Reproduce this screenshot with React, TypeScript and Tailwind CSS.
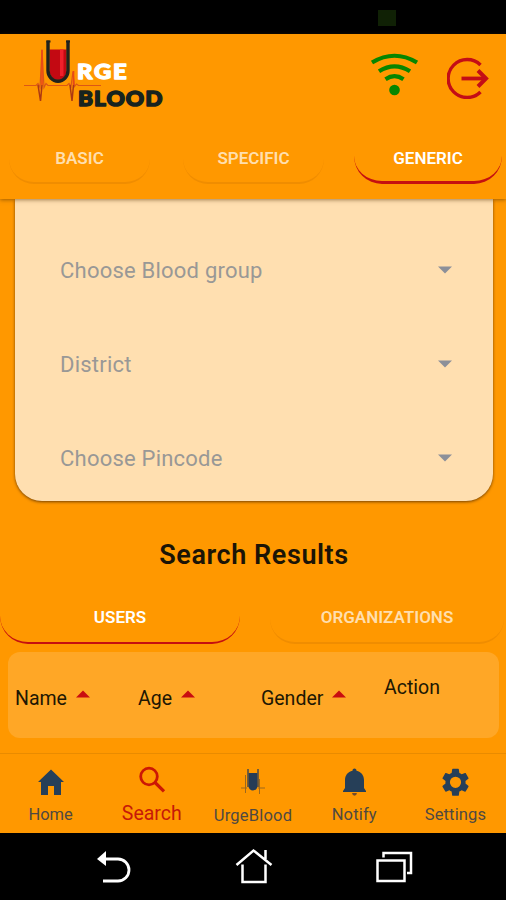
import React from "react";

const inactiveTab =
  "flex justify-center rounded-b-[25px] border-b-2 border-[#f08d00] text-[#ffdfae]";
const activeTab =
  "flex justify-center rounded-b-[28px] border-[#c51010] text-white";

function Logo() {
  return (
    <svg width="144" height="74" viewBox="22 36 144 74" className="block">
      <path d="M24 85.500H36l2-2 2 4 2-38 2 38 2-4 2 2H67l2-2 2 3 2-15 1.500 15 2-2.500 2 1.500H101" fill="none" stroke="#dc5716" strokeWidth="1.200" />
      <path d="M38 85l2.500 16 1.500-16M70 85l2 16 1.500-16" fill="none" stroke="#ad3812" strokeWidth="1.500" />
      <path d="M42 50v35M73.500 71v14" fill="none" stroke="#ea4718" strokeWidth="1.600" />
      <path d="M49.500 49.500h17V71a8.500 9 0 0 1-17 0z" fill="#c30912" />
      <path d="M60 49.500h3.500V76H60z" fill="#ef202a" />
      <path d="M48 40.500V70.500a10 10.800 0 0 0 20 0V40.500" fill="none" stroke="#20221e" strokeWidth="3.400" />
      <path d="M46.500 41.500h4M66 41.500h4" stroke="#20221e" strokeWidth="2" />
      <text x="77" y="78.500" textLength="51.500" lengthAdjust="spacingAndGlyphs" letterSpacing="1.6" fill="#fff" stroke="#fff" strokeWidth="1.300" strokeLinejoin="round" fontFamily="Lato, sans-serif" fontWeight="900" fontSize="21.500">RGE</text>
      <text x="78" y="105.500" textLength="85.500" lengthAdjust="spacingAndGlyphs" letterSpacing="1" fill="#17231f" stroke="#17231f" strokeWidth="1.500" strokeLinejoin="round" fontFamily="Lato, sans-serif" fontWeight="900" fontSize="21.500">BLOOD</text>
    </svg>
  );
}

function Wifi() {
  return (
    <svg width="50" height="44" viewBox="370 53 50 44" className="block">
      <g fill="none" stroke="#078600" strokeWidth="4.200">
        <path d="M372 63.500q22.500-13.500 45 0" />
        <path d="M379 72.300q15.500-10 31 0" />
        <path d="M385.500 80.200q9-6 18 0" />
      </g>
      <circle cx="394.500" cy="91" r="5.300" fill="#078600" />
    </svg>
  );
}

function Logout() {
  return (
    <svg width="42" height="42" viewBox="447 57 42 42" className="block">
      <g fill="none" stroke="#c40d16" strokeWidth="3.400">
        <path d="M480.500 65A19 19 0 1 0 480.500 92" />
        <path d="M461.500 78.500H485" strokeWidth="3.800" />
        <path d="M478 70.500l8 8-8 8" strokeWidth="4" />
      </g>
    </svg>
  );
}

function SelectRow({ label }: { label: string }) {
  return (
    <div className="flex h-[94px] items-center justify-between pr-[41px] pl-[45px]">
      <span className="text-[22px] tracking-[0.22px] text-[#999896]">{label}</span>
      <svg width="14" height="8" viewBox="0 0 14 8">
        <path d="M0 .5h14l-7 7z" fill="#8c9099" />
      </svg>
    </div>
  );
}

function SortArrow() {
  return (
    <svg width="14" height="8" viewBox="0 0 14 8" className="mb-[10px]">
      <path d="M0 7.500h14l-7-7z" fill="#c90d10" />
    </svg>
  );
}

function Column({ label, className }: { label: string; className: string }) {
  return (
    <div className={`flex items-center gap-[9px] pt-[7px] ${className}`}>
      <span>{label}</span>
      <SortArrow />
    </div>
  );
}

function NavItem({ label, icon, labelClass }: { label: string; icon: React.ReactNode; labelClass: string }) {
  return (
    <div className="flex flex-1 flex-col items-center">
      <div className="flex h-[46px] items-start justify-center">{icon}</div>
      <span className={`leading-[24px] whitespace-nowrap ${labelClass}`}>{label}</span>
    </div>
  );
}

export default function App() {
  return (
    <div className="flex h-[900px] w-[506px] flex-col overflow-hidden bg-[#ff9800] font-[Roboto,sans-serif]">
      <div className="flex h-[34px] shrink-0 bg-black pt-[10px] pl-[378px]">
        <div className="h-[16px] w-[18px] bg-[#102105]" />
      </div>

      <header className="z-10 flex h-[165px] shrink-0 flex-col bg-[#ff9800] shadow-[0_1px_4px_rgba(80,45,0,0.55)]">
        <div className="flex h-[98px] items-start pl-[22px]">
          <div className="pt-[2px]"><Logo /></div>
          <div className="ml-[204px] pt-[18px]"><Wifi /></div>
          <div className="ml-[27px] pt-[23px]"><Logout /></div>
        </div>
        <div className="flex h-[52px] pl-[9px] text-[17px] leading-[52px] font-semibold">
          <div className={`w-[141px] ${inactiveTab}`}>BASIC</div>
          <div className={`ml-[33px] w-[141px] ${inactiveTab}`}>SPECIFIC</div>
          <div className={`ml-[30px] w-[148px] border-b-[3px] ${activeTab}`}>GENERIC</div>
        </div>
      </header>

      <main className="flex h-[554px] shrink-0 flex-col">
        <section className="mr-[13px] ml-[15px] h-[302px] rounded-b-[27px] bg-[#ffdfb0] pt-[24px] shadow-[0_1px_3px_rgba(60,30,0,0.7)]">
          <SelectRow label="Choose Blood group" />
          <SelectRow label="District" />
          <SelectRow label="Choose Pincode" />
        </section>
        <h2 className="mt-[37px] pl-[2px] text-center text-[27px] leading-[34px] font-semibold tracking-[0.57px] text-[#1b1406]">Search Results</h2>
        <div className="mt-[19px] flex h-[53px] text-[17px] leading-[53px] font-semibold">
          <div className={`w-[240px] border-b-2 ${activeTab}`}>USERS</div>
          <div className={`ml-[30px] w-[234px] ${inactiveTab}`}>ORGANIZATIONS</div>
        </div>
        <div className="mt-[8px] mr-[7px] ml-[8px] flex h-[86px] rounded-[12px] bg-[#ffa726] pl-[7px] text-[19.5px] text-[#211703]">
          <Column label="Name" className="w-[123px]" />
          <Column label="Age" className="w-[123px]" />
          <Column label="Gender" className="w-[123px]" />
          <span className="pt-[21px] leading-[30px]">Action</span>
        </div>
      </main>

      <nav className="flex h-[80px] shrink-0 border-t border-[#e98b00] text-[#4f4942]">
        <NavItem
          label="Home"
          labelClass="pt-[3px] text-[16.5px]"
          icon={<svg width="28" height="46" viewBox="37 754 28 46"><path d="M51 769.500L38 782h3v13h7v-9h6v9h7v-13h3z" fill="#263f58" /></svg>}
        />
        <NavItem
          label="Search"
          labelClass="pt-[2px] text-[19.5px] text-[#c71808]"
          icon={<svg width="28" height="46" viewBox="138 754 28 46"><circle cx="149" cy="776.500" r="8.300" fill="none" stroke="#cc1705" strokeWidth="2.800" /><path d="M155 782.500l9 8.800" stroke="#cc1705" strokeWidth="3.200" /></svg>}
        />
        <NavItem
          label="UrgeBlood"
          labelClass="pt-[4px] text-[16.5px] tracking-[0.2px]"
          icon={<svg width="28" height="46" viewBox="239 754 28 46"><path d="M248.500 773h9v13a4.500 4.500 0 0 1-9 0z" fill="#263c57" /><path d="M248 769v18M258 769v18" stroke="#4a4a49" strokeWidth="1.500" /><path d="M241 788h6M258 788h7" stroke="#9b681f" /><path d="M245.500 775v18M259.500 779v15" stroke="#9b681f" /></svg>}
        />
        <NavItem
          label="Notify"
          labelClass="pt-[3px] text-[16.500px] tracking-[0.15px]"
          icon={<svg width="28" height="46" viewBox="340.500 754 28 46"><path d="M355 768.500c1.300 0 2 1 2 2.200 4.800 1 7.500 4.800 7.500 9.300v8l2 3v1h-23v-1l2-3v-8c0-4.500 2.700-8.300 7.500-9.300 0-1.200.7-2.200 2-2.200z" fill="#263f58" /><path d="M352.500 793h5q-.5 2.800-2.500 2.800t-2.500-2.800" fill="#754c29" /></svg>}
        />
        <NavItem
          label="Settings"
          labelClass="pt-[3px] text-[16.5px] tracking-[0.15px]"
          icon={<svg width="30" height="46" viewBox="440.500 754 30 46"><path fill="#263f58" fillRule="evenodd" transform="translate(439.200 765.500) scale(1.400)" d="M19.140 12.940c.04-.3.060-.610.060-.940s-.020-.640-.070-.940l2.030-1.580c.18-.14.230-.41.120-.61l-1.920-3.320c-.12-.22-.37-.29-.59-.22l-2.390.96c-.5-.38-1.030-.7-1.620-.94L14.400 2.810c-.04-.24-.24-.41-.48-.41h-3.840c-.24 0-.43.17-.47.41l-.36 2.540c-.59.24-1.130.57-1.620.94l-2.390-.96c-.22-.08-.47 0-.59.22L2.740 8.870c-.12.210-.08.470.12.610l2.030 1.580c-.05.3-.09.630-.09.940s.02.640.07.940l-2.030 1.580c-.18.14-.23.41-.12.610l1.920 3.320c.12.220.37.290.59.220l2.390-.96c.5.380 1.030.7 1.620.94l.36 2.540c.05.240.24.410.48.410h3.840c.24 0 .44-.17.47-.41l.36-2.540c.59-.24 1.130-.56 1.620-.94l2.390.96c.22.080.47 0 .59-.22l1.920-3.320c.12-.22.070-.47-.12-.61zM12 16a4 4 0 1 1 0-8 4 4 0 0 1 0 8z" /></svg>}
        />
      </nav>

      <div className="flex h-[67px] shrink-0 bg-black pl-[96px]">
        <svg width="36" height="67" viewBox="96 833 36 67">
          <path d="M105 859h13a11 11 0 0 1 0 22h-15" fill="none" stroke="#fff" strokeWidth="2.800" />
          <path d="M97 859l9-8v15z" fill="#fff" />
        </svg>
        <svg width="38" height="67" viewBox="235 833 38 67" className="ml-[103px]">
          <path d="M236.500 865l17-14.500 18 14.500M242.500 864.500v17.500h23v-17.500M265.500 850v9" fill="none" stroke="#fff" strokeWidth="2.500" />
        </svg>
        <svg width="38" height="67" viewBox="375 833 38 67" className="ml-[102px]">
          <path d="M377.500 860.500h27v20.500h-27zM383.500 857.500v-4.500h27.500v20h-4" fill="none" stroke="#fff" strokeWidth="2.500" />
        </svg>
      </div>
    </div>
  );
}
